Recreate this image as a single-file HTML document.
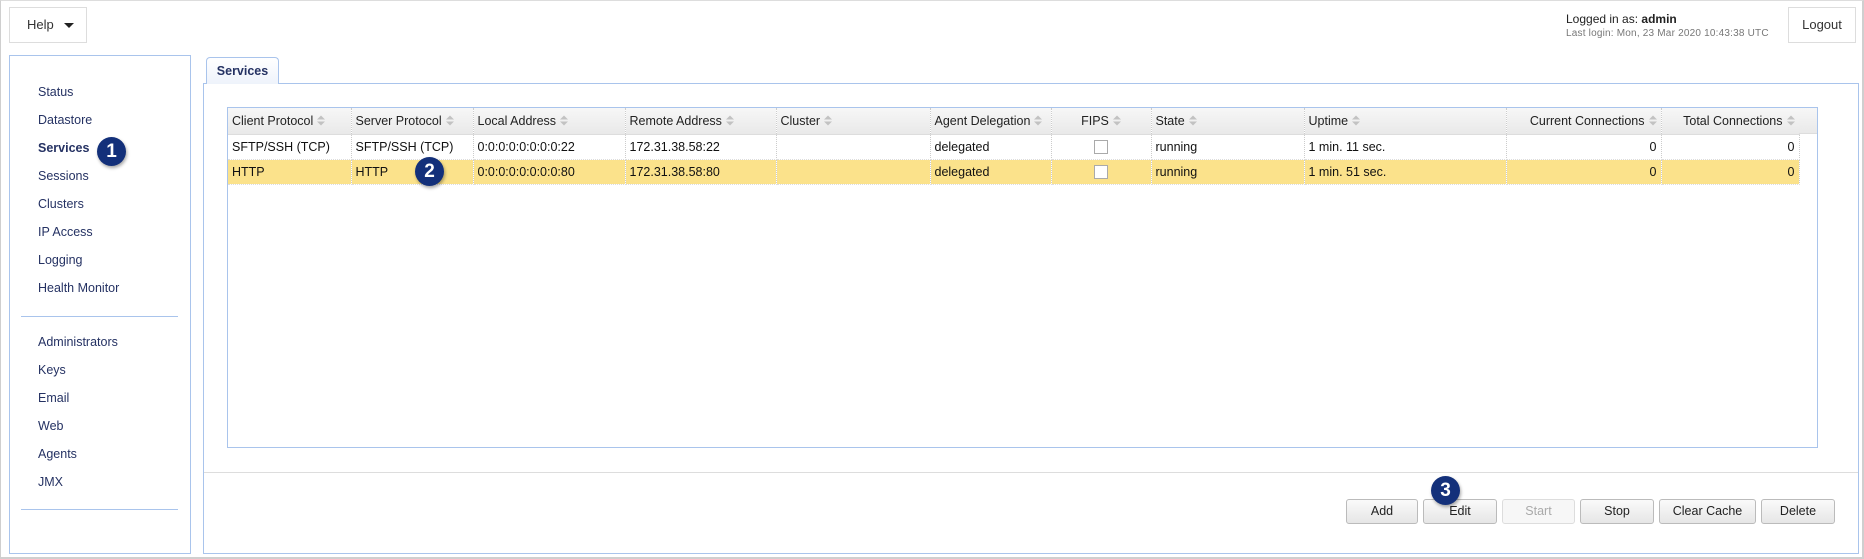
<!DOCTYPE html>
<html><head><meta charset="utf-8"><style>
*{box-sizing:border-box;margin:0;padding:0}
body{width:1864px;height:559px;background:#fff;font-family:"Liberation Sans",Arial,sans-serif;font-size:13px;color:#111;position:relative;overflow:hidden}
.abs{position:absolute}
.outer{left:0;top:0;width:1864px;height:559px;border:2px solid #cfcfcf;border-left:1px solid #cfcfcf;border-top:1px solid #ddd}
.box{border:1px solid #ddd;background:#fff}
.nav{left:38px;color:#253263;font-size:12.5px}
.sep{left:21px;width:157px;height:1px;background:#a9c4ec}
.badge{width:29px;height:29px;border-radius:50%;background:#13307a;color:#fff;font-weight:bold;font-size:19px;text-align:center;line-height:29px;box-shadow:1px 2px 3px rgba(0,0,0,.35)}
table{border-collapse:collapse;table-layout:fixed}
td,th{height:25px;padding:0 4px;white-space:nowrap;overflow:hidden;font-size:12.5px;border-right:1px dotted #ccc;text-align:left;font-weight:normal}
th{background:linear-gradient(#f7f7f7,#e9e9e9);height:26px;border-bottom:1px solid #ddd;color:#222}
tr.r td{border-bottom:1px dotted #ddd}
tr.hl td{background:#fbe28b}
.s{display:inline-block;width:8px;height:11px;margin-left:4px;vertical-align:-1px}
.cb{display:inline-block;width:14px;height:14px;border:1px solid #aaa;background:#fff;vertical-align:middle}
.btn{top:499px;height:25px;border:1px solid #bbb;border-radius:3px;background:linear-gradient(#fafafa,#e6e6e6);text-align:center;line-height:23px;font-size:12.5px;color:#222}
</style></head><body>
<svg width="0" height="0" style="position:absolute"><defs><symbol id="so" viewBox="0 0 8 11"><path d="M0 4.5L4 0.5L8 4.5Z M0 6.5L4 10.5L8 6.5Z" fill="#c2c2c2"/></symbol></defs></svg>
<div class="abs outer"></div>
<div class="abs box" style="left:9px;top:7px;width:78px;height:36px;line-height:34px;padding-left:17px;color:#333">Help <span style="display:inline-block;width:0;height:0;border-left:5px solid transparent;border-right:5px solid transparent;border-top:5px solid #222;vertical-align:middle;margin-left:7px"></span></div>
<div class="abs" style="left:1566px;top:12px;font-size:12px;color:#222">Logged in as: <b>admin</b></div>
<div class="abs" style="left:1566px;top:28px;font-size:10px;color:#777;letter-spacing:0.2px">Last login: Mon, 23 Mar 2020 10:43:38 UTC</div>
<div class="abs box" style="left:1788px;top:7px;width:68px;height:36px;line-height:34px;text-align:center;color:#333">Logout</div>

<div class="abs" style="left:9px;top:55px;width:182px;height:499px;border:1px solid #a9c4ec"></div>
<div class="abs nav" style="top:85px">Status</div>
<div class="abs nav" style="top:113px">Datastore</div>
<div class="abs nav" style="top:141px;font-weight:bold">Services</div>
<div class="abs nav" style="top:169px">Sessions</div>
<div class="abs nav" style="top:197px">Clusters</div>
<div class="abs nav" style="top:225px">IP Access</div>
<div class="abs nav" style="top:253px">Logging</div>
<div class="abs nav" style="top:281px">Health Monitor</div>
<div class="abs sep" style="top:316px"></div>
<div class="abs nav" style="top:335px">Administrators</div>
<div class="abs nav" style="top:363px">Keys</div>
<div class="abs nav" style="top:391px">Email</div>
<div class="abs nav" style="top:419px">Web</div>
<div class="abs nav" style="top:447px">Agents</div>
<div class="abs nav" style="top:475px">JMX</div>
<div class="abs sep" style="top:509px"></div>
<div class="abs badge" style="left:97px;top:137px">1</div>

<div class="abs" style="left:203px;top:83px;width:1656px;height:471px;border:1px solid #a9c4ec"></div>
<div class="abs" style="left:206px;top:57px;width:73px;height:27px;border:1px solid #a9c4ec;border-bottom:none;border-radius:4px 4px 0 0;background:linear-gradient(#fff,#eef3fb);font-weight:bold;color:#253263;font-size:12.5px;text-align:center;line-height:26px">Services</div>

<div class="abs" style="left:227px;top:107px;width:1591px;height:341px;border:1px solid #a9c4ec;background:#fff">
<table style="width:1571px">
<colgroup><col style="width:123px"><col style="width:122px"><col style="width:152px"><col style="width:151px"><col style="width:154px"><col style="width:121px"><col style="width:100px"><col style="width:153px"><col style="width:202px"><col style="width:155px"><col style="width:138px"></colgroup>
<tr><th>Client Protocol<svg class="s"><use href="#so"/></svg></th><th>Server Protocol<svg class="s"><use href="#so"/></svg></th><th>Local Address<svg class="s"><use href="#so"/></svg></th><th>Remote Address<svg class="s"><use href="#so"/></svg></th><th>Cluster<svg class="s"><use href="#so"/></svg></th><th>Agent Delegation<svg class="s"><use href="#so"/></svg></th><th style="text-align:center">FIPS<svg class="s"><use href="#so"/></svg></th><th>State<svg class="s"><use href="#so"/></svg></th><th>Uptime<svg class="s"><use href="#so"/></svg></th><th style="text-align:right">Current Connections<svg class="s"><use href="#so"/></svg></th><th style="text-align:right">Total Connections<svg class="s"><use href="#so"/></svg></th></tr>
<tr class="r"><td>SFTP/SSH (TCP)</td><td>SFTP/SSH (TCP)</td><td>0:0:0:0:0:0:0:0:22</td><td>172.31.38.58:22</td><td></td><td>delegated</td><td style="text-align:center"><span class="cb"></span></td><td>running</td><td>1 min. 11 sec.</td><td style="text-align:right">0</td><td style="text-align:right">0</td></tr>
<tr class="r hl"><td>HTTP</td><td>HTTP</td><td>0:0:0:0:0:0:0:0:80</td><td>172.31.38.58:80</td><td></td><td>delegated</td><td style="text-align:center"><span class="cb"></span></td><td>running</td><td>1 min. 51 sec.</td><td style="text-align:right">0</td><td style="text-align:right">0</td></tr>
</table>
<div class="abs" style="left:1571px;top:0;width:18px;height:26px;background:linear-gradient(#f7f7f7,#e9e9e9);border-bottom:1px solid #ddd"></div>
</div>
<div class="abs badge" style="left:415px;top:157px">2</div>

<div class="abs" style="left:204px;top:472px;width:1654px;height:1px;background:#ddd"></div>
<div class="abs btn" style="left:1346px;width:72px">Add</div>
<div class="abs btn" style="left:1423px;width:74px">Edit</div>
<div class="abs btn" style="left:1502px;width:73px;color:#aaa;border-color:#ddd;background:#f7f7f7">Start</div>
<div class="abs btn" style="left:1580px;width:74px">Stop</div>
<div class="abs btn" style="left:1659px;width:97px">Clear Cache</div>
<div class="abs btn" style="left:1761px;width:74px">Delete</div>
<div class="abs badge" style="left:1431px;top:476px">3</div>
</body></html>
